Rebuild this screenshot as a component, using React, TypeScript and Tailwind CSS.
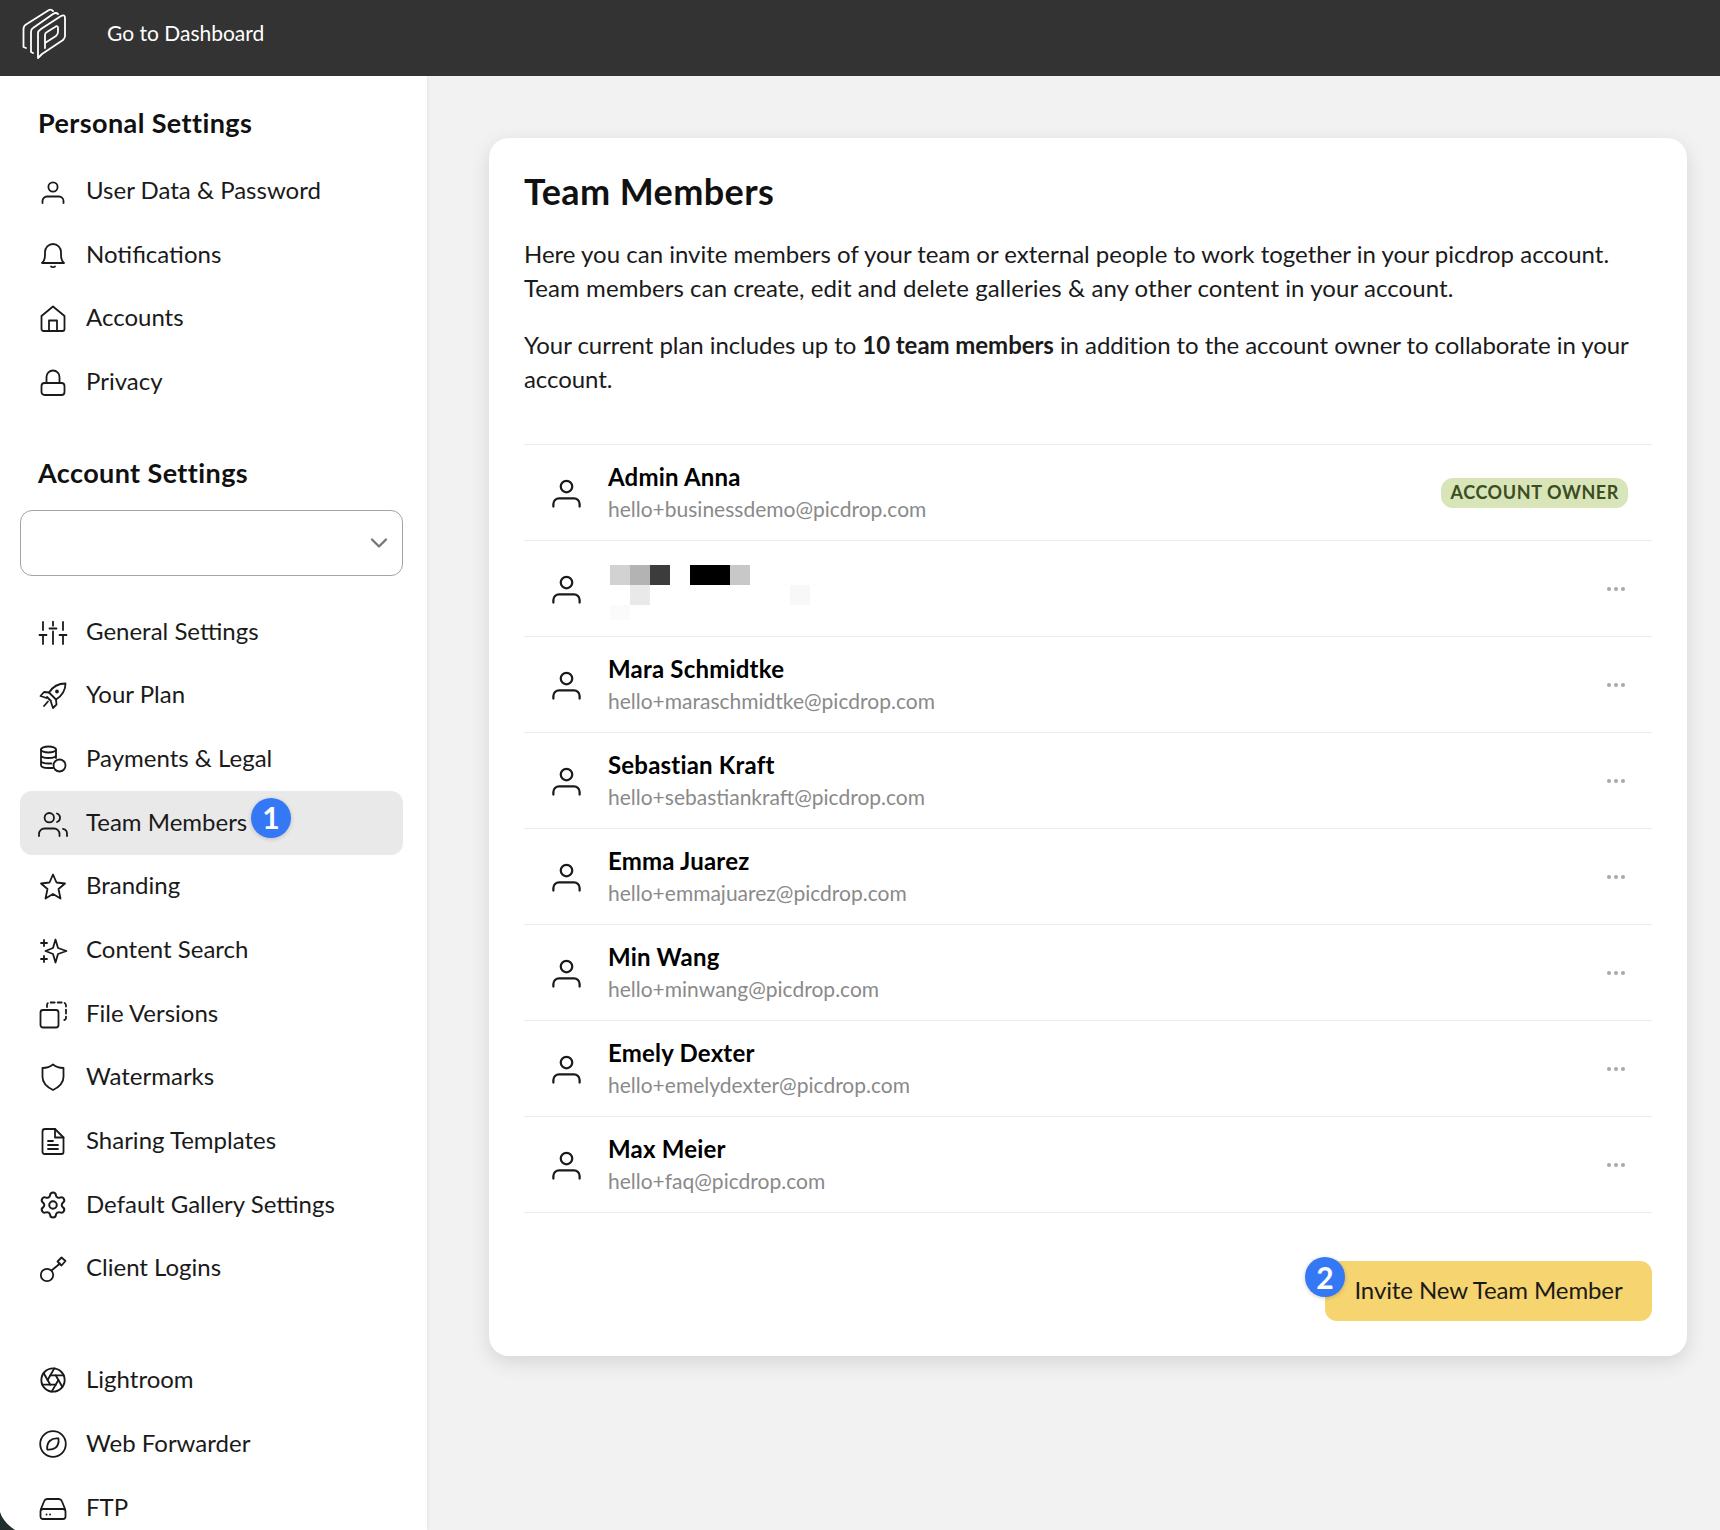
import React from 'react';
import { Aperture, ChevronDown, Settings } from 'lucide-react';

const Icon = ({ children, className = 'w-7 h-7' }: { children: React.ReactNode; className?: string }) => (
    <svg viewBox="0 0 28 28" fill="none" stroke="currentColor" strokeWidth="1.8" strokeLinecap="round" strokeLinejoin="round" className={`${className} overflow-visible shrink-0`}>
        {children}
    </svg>
);

const UserIcon = ({ className }: { className?: string }) => (
    <Icon className={className}>
        <circle cx="14" cy="10" r="4.6" />
        <path d="M3.5 26v-2a4.5 4.5 0 0 1 4.5-4.5h12a4.5 4.5 0 0 1 4.5 4.5v2" />
    </Icon>
);

const icons: Record<string, React.ReactNode> = {
    user: <UserIcon />,
    bell: (
        <Icon>
            <path d="M3 22h22c-2.2-2-3-4-3-8v-3a8 8 0 0 0-16 0v3c0 4-.8 6-3 8z" />
            <path d="M12 25.5c.6.8 3.4.8 4 0" />
        </Icon>
    ),
    home: (
        <Icon>
            <path d="M2.5 12 14 2.5 25.5 12v13a2 2 0 0 1-2 2h-19a2 2 0 0 1-2-2z" />
            <path d="M10 27V16.5h8V27" />
        </Icon>
    ),
    lock: (
        <Icon>
            <rect x="2.5" y="15" width="23" height="12" rx="3" />
            <path d="M7.5 15V9a6.5 6.5 0 0 1 13 0v6" />
        </Icon>
    ),
    sliders: (
        <Icon>
            <path d="M4 4v8M4 17v9M.5 17h7M14 3.700v4M10.500 10.500h7M14 13.500V26M24 4v8M24 17v9M20.500 17h7" />
        </Icon>
    ),
    rocket: (
        <Icon>
            <path d="M26.500 2.500C19 2.500 13.500 6 10 11.500l7 7C22.500 15 26.500 10 26.500 2.500z" />
            <path d="M10 11.500 5 11 1.500 15l6 2M17 18.500l.5 5-3.500 3.500-2-6M8 16l4 4M5 25l4-4.500" />
            <circle cx="18" cy="10.500" r="1" />
        </Icon>
    ),
    coins: (
        <Icon>
            <ellipse cx="9.500" cy="4.500" rx="7.500" ry="3" />
            <path d="M2 4.500V20c0 2 3 3 7.500 3H14M17 4.500V13M2 10c0 2 3 3 7.500 3s7.500-1 7.500-3M2 15.500c0 2 3 3 7.500 3h3" />
            <circle cx="20.500" cy="20.500" r="6" />
        </Icon>
    ),
    users: (
        <Icon>
            <circle cx="10.300" cy="8.700" r="4.700" />
            <path d="M0 27v-2a5.500 5.500 0 0 1 5.500-5.500H15a5.500 5.500 0 0 1 5.500 5.500v2M24 19.800a5 5 0 0 1 4 5V27M18 4.500a4.500 4.500 0 0 1 0 8.500" />
        </Icon>
    ),
    star: (
        <Icon>
            <path d="M14 2.500 17.500 10.500 26 11.500 19.500 17 21.500 26.500 14 22 6.500 26.500 8.500 17 2 11.500 10.500 10.500z" />
        </Icon>
    ),
    sparkles: (
        <Icon>
            <path d="M16.500 3.500 19 12l8.500 3-8.500 3-2.500 8.500L14 18l-7.500-3 7.500-3z" />
            <path d="M5 4v6M2 7h6M5 20v6M2 23h6" />
        </Icon>
    ),
    versions: (
        <Icon>
            <rect x="1.500" y="10" width="18" height="17.500" rx="2.500" />
            <path d="M8 7V5a2.500 2.500 0 0 1 2.500-2.500H24a3 3 0 0 1 3 3V18a2 2 0 0 1-2 2h-2" strokeDasharray="4 3" />
        </Icon>
    ),
    shield: (
        <Icon>
            <path d="M14 1.500c3 2.500 6 3.500 10.500 3.500v9c0 6-4.500 10-10.500 13-6-3-10.500-7-10.500-13V5C8 5 11 4 14 1.500z" />
        </Icon>
    ),
    doc: (
        <Icon>
            <path d="M6 2h10l8.500 8.500V25a2 2 0 0 1-2 2h-17a2 2 0 0 1-2-2V4.500A2.500 2.500 0 0 1 6 2z" />
            <path d="M16 2v8.500h8.500M9 14h5M9 18h10M9 22h10" />
        </Icon>
    ),
    gear: <Settings className="w-[30px] h-[30px] shrink-0 -mx-px" strokeWidth={1.6} />,
    key: (
        <Icon>
            <circle cx="8" cy="21" r="6.200" />
            <path d="M12.500 16.500 21 9.500M18.500 7.500l4-4 4 3.500-4 4.500z" />
        </Icon>
    ),
    aperture: <Aperture className="w-7 h-7 shrink-0" strokeWidth={1.6} />,
    compass: (
        <Icon>
            <circle cx="14" cy="14" r="12.800" />
            <path d="M19.500 8.500c.5 4-.8 7.500-3 9.300-2 1.500-5 2-8.300 1.700-.3-3.500.5-6.500 2.500-8.500 2-2 5-3 8.800-2.500z" />
        </Icon>
    ),
    drive: (
        <Icon>
            <path d="M2 15 5 7.500A3.500 3.500 0 0 1 8 5h12a3.500 3.500 0 0 1 3 2.500L26 15" />
            <rect x="1.500" y="15" width="25" height="10" rx="2.500" />
            <path d="M7.500 20.500h.1M11 20.500h.1" />
        </Icon>
    ),
};

const personal = [
    { icon: 'user', label: 'User Data & Password' },
    { icon: 'bell', label: 'Notifications' },
    { icon: 'home', label: 'Accounts' },
    { icon: 'lock', label: 'Privacy' },
];

const account = [
    { icon: 'sliders', label: 'General Settings' },
    { icon: 'rocket', label: 'Your Plan' },
    { icon: 'coins', label: 'Payments & Legal' },
    { icon: 'users', label: 'Team Members', active: true },
    { icon: 'star', label: 'Branding' },
    { icon: 'sparkles', label: 'Content Search' },
    { icon: 'versions', label: 'File Versions' },
    { icon: 'shield', label: 'Watermarks' },
    { icon: 'doc', label: 'Sharing Templates' },
    { icon: 'gear', label: 'Default Gallery Settings' },
    { icon: 'key', label: 'Client Logins' },
];

const extras = [
    { icon: 'aperture', label: 'Lightroom' },
    { icon: 'compass', label: 'Web Forwarder' },
    { icon: 'drive', label: 'FTP' },
];

const members = [
    { name: 'Admin Anna', email: 'hello+businessdemo@picdrop.com', owner: true },
    { name: '', email: '' },
    { name: 'Mara Schmidtke', email: 'hello+maraschmidtke@picdrop.com' },
    { name: 'Sebastian Kraft', email: 'hello+sebastiankraft@picdrop.com' },
    { name: 'Emma Juarez', email: 'hello+emmajuarez@picdrop.com' },
    { name: 'Min Wang', email: 'hello+minwang@picdrop.com' },
    { name: 'Emely Dexter', email: 'hello+emelydexter@picdrop.com' },
    { name: 'Max Meier', email: 'hello+faq@picdrop.com' },
];

const StepBadge = ({ n, className }: { n: number; className: string }) => (
    <span className={`absolute w-10 h-10 rounded-full bg-[#3478f6] text-white text-[30px] font-bold flex items-center justify-center shadow-[0_1px_4px_rgba(0,0,0,0.2)] ${className}`}>
        {n}
    </span>
);

const NavItem = ({ icon, label, active }: { icon: string; label: string; active?: boolean }) => (
    <div className={`relative h-[63.7px] flex items-center pl-[19px] gap-[19px] rounded-xl text-[#1a1a1a] ${active ? 'bg-[#e9e9e9]' : ''}`}>
        {icons[icon]}
        <span className="text-[24px] pb-[2px]">{label}</span>
        {active && <StepBadge n={1} className="left-[231px] top-[7px]" />}
    </div>
);

const Logo = () => (
    <svg viewBox="0 0 50 60" fill="none" stroke="white" strokeWidth="1.800" strokeLinecap="round" strokeLinejoin="round" className="w-[50px] h-[60px] shrink-0 mb-2">
        <path d="M6 44l-2.500-1V25q0-3 2.500-4.500L29 6q2-1 4 1" />
        <path d="M13 49l-2-1V28q0-3 2-4L33 10q3-2 5 0" />
        <path d="M18 54V29q0-2 3-4L41 12q4-2 4 2v18q0 2-2 4L22 50z" />
        <path d="M25 44V31q0-2 2-3l8-5q3-2 3 1v4q0 2-2 4l-11 7" />
    </svg>
);

const PixelBlock = () => (
    <div className="grid grid-cols-[repeat(10,20px)] grid-rows-[20px_20px_15px] ml-0.5 mt-[7px]">
        <div className="bg-[#d2d2d2]" />
        <div className="bg-[#b3b3b3]" />
        <div className="bg-[#3c3c3c]" />
        <div />
        <div className="col-span-2 bg-black" />
        <div className="bg-[#c8c8c8]" />
        <div className="col-span-3" />
        <div />
        <div className="bg-[#e9e9e9]" />
        <div className="col-span-7" />
        <div className="bg-[#f8f8f8]" />
        <div className="bg-[#fbfbfb]" />
    </div>
);

const App = () => {
    return (
        <div className="relative h-[1530px] overflow-hidden flex flex-col bg-[#f2f2f2] text-[#1a1a1a] font-['Lato','Liberation_Sans',sans-serif]">
            <header className="h-[76px] shrink-0 bg-[#333333] flex items-center pl-5 gap-[37px] text-white">
                <Logo />
                <span className="text-[21px] mb-[11px]">Go to Dashboard</span>
            </header>

            <div className="flex flex-1 min-h-0">
                <aside className="w-[427px] shrink-0 bg-white pl-5 pr-6 overflow-hidden shadow-[1px_0_3px_rgba(0,0,0,0.06)]">
                    <h2 className="pt-[31px] pl-[18px] text-[27px] leading-8 font-bold tracking-[0.4px] text-[#111]">Personal Settings</h2>
                    <nav className="mt-5">
                        {personal.map((item) => (
                            <NavItem key={item.label} {...item} />
                        ))}
                    </nav>
                    <h2 className="mt-[43px] pl-[18px] text-[27px] leading-8 font-bold tracking-[0.4px] text-[#111]">Account Settings</h2>
                    <div className="mt-[21px] h-[66px] border border-[#a3a3a3] rounded-xl flex items-center justify-end pr-[9px] text-[#777]">
                        <ChevronDown className="w-7 h-7" strokeWidth={2} />
                    </div>
                    <nav className="mt-6">
                        {account.map((item) => (
                            <NavItem key={item.label} {...item} />
                        ))}
                    </nav>
                    <nav className="mt-12">
                        {extras.map((item) => (
                            <NavItem key={item.label} {...item} />
                        ))}
                    </nav>
                </aside>

                <main className="flex-1 pl-[62px] pt-[62px]">
                    <div className="w-[1198px] bg-white rounded-[20px] px-[35px] pt-[31px] pb-[35px] shadow-[0_6px_20px_rgba(0,0,0,0.12)]">
                        <h1 className="text-[36px] leading-[44px] font-bold tracking-[0.4px] text-[#111]">Team Members</h1>
                        <p className="mt-6 text-[24px] leading-[34px]">
                            <span className="block">Here you can invite members of your team or external people to work together in your picdrop account.</span>
                            <span className="block tracking-[0.07px]">Team members can create, edit and delete galleries &amp; any other content in your account.</span>
                        </p>
                        <p className="mt-[23px] text-[24px] leading-[34px] tracking-[-0.06px]">
                            Your current plan includes up to <strong className="font-bold">10 team members</strong> in addition to the account owner to collaborate in your account.
                        </p>

                        <div className="mt-12 border-t border-[#ebebeb]">
                            {members.map((m, i) => (
                                <div key={i} className="h-[96px] border-b border-[#ebebeb] flex items-center pl-[24.5px]">
                                    <UserIcon className="w-[35px] h-[35px] mb-[2px]" />
                                    <div className="ml-[24.5px] flex-1">
                                        {m.name ? (
                                            <div className="mb-[2px]">
                                                <div className="text-[24px] leading-8 font-bold tracking-[0.2px] text-black">{m.name}</div>
                                                <div className="text-[21px] leading-7 mt-[2px] text-[#8a8a8a]">{m.email}</div>
                                            </div>
                                        ) : (
                                            <PixelBlock />
                                        )}
                                    </div>
                                    {m.owner ? (
                                        <span className="mr-6 h-[30px] px-[9px] rounded-xl bg-[#d8e5b9] text-[#3c4d21] text-[18px] font-bold tracking-[0.6px] flex items-center">
                                            ACCOUNT OWNER
                                        </span>
                                    ) : (
                                        <div className="mr-[27px] mt-[1px] flex gap-[3px]">
                                            <span className="w-[4px] h-[4px] rounded-full bg-[#a8a8a8]" />
                                            <span className="w-[4px] h-[4px] rounded-full bg-[#a8a8a8]" />
                                            <span className="w-[4px] h-[4px] rounded-full bg-[#a8a8a8]" />
                                        </div>
                                    )}
                                </div>
                            ))}
                        </div>

                        <div className="mt-12 flex justify-end">
                            <button className="relative w-[327px] h-[60px] pb-[2px] rounded-xl bg-[#f6d46f] text-[24px] tracking-[-0.1px] text-[#1a1a1a]">
                                Invite New Team Member
                                <StepBadge n={2} className="-left-5 -top-1" />
                            </button>
                        </div>
                    </div>
                </main>
            </div>

            <svg viewBox="0 0 16 20" className="absolute left-0 bottom-0 w-4 h-5">
                <path d="M0 2Q3 12 15 20H0z" fill="#1f2f2e" />
            </svg>
        </div>
    );
};

export default App;
